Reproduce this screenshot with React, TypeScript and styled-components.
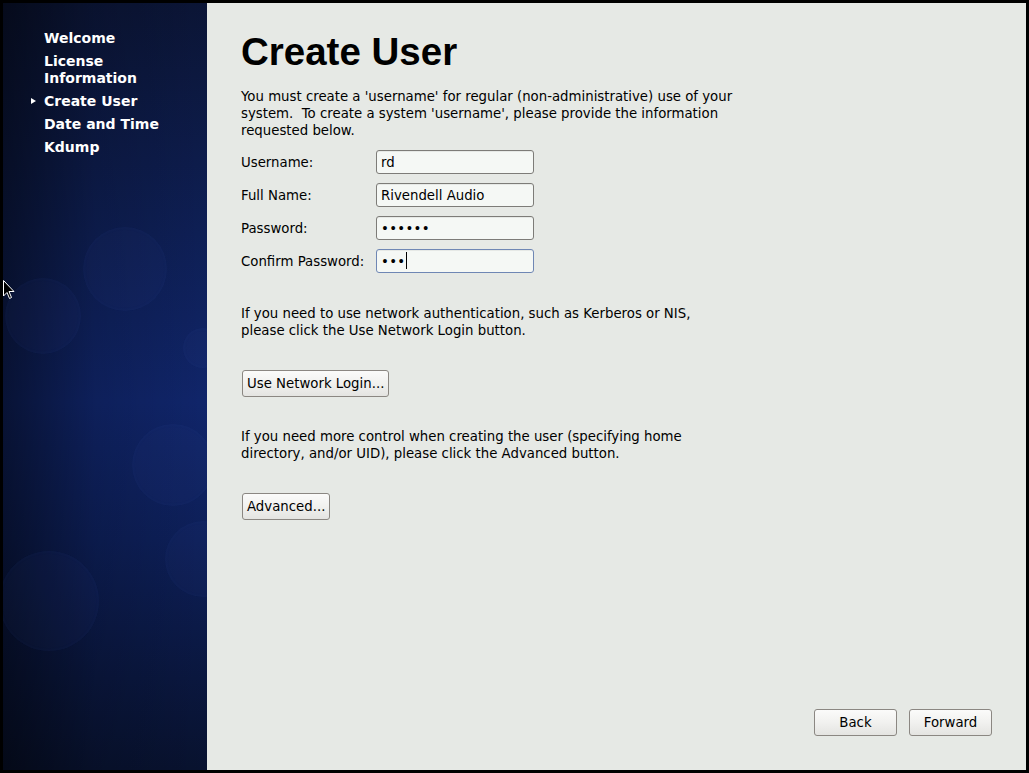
import React from "react";
import styled, { createGlobalStyle } from "styled-components";

const Global = createGlobalStyle`
  html, body { margin: 0; padding: 0; background: #000; }
  body { font-family: "DejaVu Sans", sans-serif; }
  * { box-sizing: border-box; }
`;

const Screen = styled.div`
  width: 1029px;
  height: 773px;
  padding: 3px;
  background: #000;
  display: grid;
  grid-template-columns: 204px 1fr;
  position: relative;
  overflow: hidden;
`;

const Sidebar = styled.nav`
  position: relative;
  overflow: hidden;
  background:
    linear-gradient(to right, rgba(0, 0, 0, 0.5) 0%, rgba(0, 0, 0, 0.15) 45%, rgba(0, 0, 0, 0) 100%),
    linear-gradient(to bottom, #0b1536 0%, #0e1f55 30%, #10256a 52%, #0d1f58 70%, #0a173f 88%, #08122f 100%);
  padding: 27px 0 0 41px;
  display: flex;
  flex-direction: column;
  gap: 6px;
`;

const Bubble = styled.span<{ $x: number; $y: number; $r: number }>`
  position: absolute;
  left: ${(p) => p.$x - p.$r}px;
  top: ${(p) => p.$y - p.$r}px;
  width: ${(p) => p.$r * 2}px;
  height: ${(p) => p.$r * 2}px;
  border-radius: 50%;
  background: rgba(70, 100, 180, 0.055);
  box-shadow: inset 0 0 4px rgba(90, 120, 200, 0.06);
`;

const NavItem = styled.div<{ $current?: boolean }>`
  position: relative;
  z-index: 1;
  color: #fff;
  font-family: "DejaVu Sans", sans-serif;
  font-weight: bold;
  font-size: 14px;
  line-height: 17px;
  width: 120px;
`;

const Arrow = styled.span`
  position: absolute;
  left: -13px;
  top: 5px;
  width: 0;
  height: 0;
  border-top: 3.5px solid transparent;
  border-bottom: 3.5px solid transparent;
  border-left: 5px solid #fff;
`;

const Main = styled.main`
  background: #e6e9e5;
  padding: 30px 34px 34px 34px;
  display: flex;
  flex-direction: column;
`;

const Title = styled.h1`
  margin: 0 0 16px 0;
  font-family: "Liberation Sans", Arial, sans-serif;
  font-weight: bold;
  font-size: 38.5px;
  line-height: 38.5px;
  color: #000;
`;

const Para = styled.p<{ $mt?: number }>`
  margin: ${(p) => p.$mt ?? 0}px 0 0 0;
  font-size: 13.3px;
  line-height: 17px;
  color: #000;
  width: 496px;
`;

const Form = styled.div`
  margin-top: 11px;
  display: grid;
  grid-template-columns: 135px 158px;
  row-gap: 9px;
  align-items: center;
`;

const Label = styled.label`
  font-size: 13.3px;
  color: #000;
  padding-top: 2px;
`;

const Field = styled.div<{ $focused?: boolean; $secret?: boolean }>`
  height: 24px;
  border: 1px solid ${(p) => (p.$focused ? "#6f87b4" : "#7d7c78")};
  border-radius: 3px;
  background: #f5f8f5;
  box-shadow: inset 0 1px 0 rgba(0, 0, 0, 0.06);
  padding: 2px 4px 0 4px;
  display: flex;
  align-items: center;
  font-size: 13.3px;
  color: #000;
  letter-spacing: ${(p) => (p.$secret ? "0.3px" : "0")};
  white-space: nowrap;
`;

const Caret = styled.span`
  display: inline-block;
  width: 1px;
  height: 17px;
  background: #000;
  margin-left: 1px;
  margin-top: -2px;
`;

const Button = styled.button<{ $w?: number; $mt?: number }>`
  align-self: flex-start;
  height: 27px;
  width: ${(p) => (p.$w ? `${p.$w}px` : "auto")};
  padding: 0 4px;
  border: 1px solid #8b8782;
  border-radius: 3px;
  background: linear-gradient(to bottom, #fbfbfa 0%, #f1f1ef 50%, #e4e4e1 100%);
  font-family: "DejaVu Sans", sans-serif;
  font-size: 13.3px;
  color: #000;
  cursor: default;
  margin: ${(p) => p.$mt ?? 0}px 0 0 1px;
`;

const Footer = styled.div`
  margin-top: auto;
  display: flex;
  justify-content: flex-end;
  gap: 11px;
`;

const Cursor = styled.svg`
  position: absolute;
  left: 3px;
  top: 280px;
`;

export default function App() {
  return (
    <>
      <Global />
      <Screen>
        <Sidebar>
          <Bubble $x={122} $y={266} $r={42} />
          <Bubble $x={40} $y={313} $r={38} />
          <Bubble $x={170} $y={462} $r={41} />
          <Bubble $x={46} $y={598} $r={50} />
          <Bubble $x={200} $y={556} $r={38} />
          <Bubble $x={200} $y={345} $r={20} />
          <NavItem>Welcome</NavItem>
          <NavItem>License Information</NavItem>
          <NavItem $current>
            <Arrow />
            Create User
          </NavItem>
          <NavItem>Date and Time</NavItem>
          <NavItem>Kdump</NavItem>
        </Sidebar>
        <Main>
          <Title>Create User</Title>
          <Para>
            You must create a 'username' for regular (non-administrative) use of your system.&nbsp; To create a
            system 'username', please provide the information requested below.
          </Para>
          <Form>
            <Label>Username:</Label>
            <Field>rd</Field>
            <Label>Full Name:</Label>
            <Field>Rivendell Audio</Field>
            <Label>Password:</Label>
            <Field $secret>••••••</Field>
            <Label>Confirm Password:</Label>
            <Field $secret $focused>
              •••
              <Caret />
            </Field>
          </Form>
          <Para $mt={32}>
            If you need to use network authentication, such as Kerberos or NIS, please click the Use Network Login
            button.
          </Para>
          <Button $mt={31}>Use Network Login...</Button>
          <Para $mt={31}>
            If you need more control when creating the user (specifying home directory, and/or UID), please click
            the Advanced button.
          </Para>
          <Button $mt={31}>Advanced...</Button>
          <Footer>
            <Button $w={83}>Back</Button>
            <Button $w={83}>Forward</Button>
          </Footer>
        </Main>
        <Cursor width="13" height="21" viewBox="0 0 13 21">
          <path d="M0.5 0.5 L0.5 16 L4 12.5 L6.5 18.5 L8.5 17.5 L6 11.5 L11 11.5 Z" fill="#000" stroke="#fff" strokeWidth="1" />
        </Cursor>
      </Screen>
    </>
  );
}
